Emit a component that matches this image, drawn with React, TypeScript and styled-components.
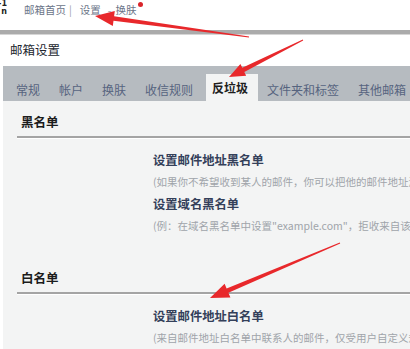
import React from "react";
import styled, { createGlobalStyle } from "styled-components";

const Global = createGlobalStyle`
  html, body { margin: 0; padding: 0; background: #fff; }
  body { font-family: "Noto Sans CJK SC", "Microsoft YaHei", sans-serif; overflow: hidden; }
  #root { width: 410px; height: 349px; position: relative; overflow: hidden; }
`;

const Page = styled.div`
  width: 410px;
  height: 349px;
  display: flex;
  flex-direction: column;
  background: #fff;
`;

const TopBar = styled.div`
  height: 31px;
  display: flex;
  align-items: flex-start;
  font-size: 10.5px;
  line-height: 19px;
  color: #6b7588;
`;

const Logo = styled.div`
  width: 7px;
  height: 16px;
  overflow: hidden;
  display: flex;
  flex-direction: column;
  align-items: flex-end;
  font-family: "DejaVu Sans", sans-serif;
  font-weight: bold;
  color: #222;
  font-size: 8px;
  line-height: 8px;
  white-space: nowrap;
`;

const Nav = styled.nav`
  display: flex;
  align-items: flex-start;
  margin-left: 17px;
`;

const NavLink = styled.span<{ $gap?: number }>`
  margin-right: ${(p) => p.$gap ?? 0}px;
  position: relative;
`;

const Sep = styled.span<{ $gap: number }>`
  color: #9aa0a8;
  margin-right: ${(p) => p.$gap}px;
`;

const Dot = styled.span`
  position: absolute;
  right: -6px;
  top: 2px;
  width: 5px;
  height: 5px;
  border-radius: 50%;
  background: #d9252b;
`;

const Band = styled.div`
  height: 4px;
  background: #ababab;
  border-bottom: 1px solid #d6d6d6;
`;

const Panel = styled.div`
  margin-left: 3px;
  flex: 1;
  display: flex;
  flex-direction: column;
`;

const PageTitle = styled.div`
  height: 31px;
  line-height: 30px;
  padding-left: 7px;
  font-size: 12.5px;
  color: #22262e;
`;

const TabBar = styled.div`
  height: 35px;
  background: #b6bbc0;
  display: flex;
  align-items: flex-end;
  padding-left: 7px;
  gap: 3px;
  white-space: nowrap;
`;

const Tab = styled.div<{ $active?: boolean }>`
  height: 27px;
  padding: 0 10px 0 6px;
  font-size: 12px;
  line-height: ${(p) => (p.$active ? "27px" : "31px")};
  color: ${(p) => (p.$active ? "#1e1e1e" : "#56647f")};
  font-weight: ${(p) => (p.$active ? "bold" : "normal")};
  background: ${(p) => (p.$active ? "#f3f4f4" : "transparent")};
`;

const Content = styled.div`
  flex: 1;
  background: #f3f4f4;
  display: flex;
  flex-direction: column;
`;

const SectionTitle = styled.div<{ $top: number }>`
  margin-top: ${(p) => p.$top}px;
  padding-left: 18px;
  line-height: 20px;
  font-size: 12.5px;
  font-weight: bold;
  color: #1c1c1c;
`;

const Divider = styled.div`
  margin: 4px 0 10px 14px;
  height: 2px;
  background: #a4a4a4;
  border-bottom: 1px solid #fff;
`;

const Items = styled.div`
  padding-left: 150px;
  white-space: nowrap;
`;

const ItemTitle = styled.div`
  font-size: 12.3px;
  line-height: 22px;
  font-weight: bold;
  color: #34405a;
`;

const ItemDesc = styled.div`
  font-size: 10.5px;
  line-height: 22px;
  color: #a0a4aa;
`;

const Overlay = styled.svg`
  position: absolute;
  left: 0;
  top: 0;
  pointer-events: none;
`;

type Pt = [number, number];

function arrowPath(tail: Pt, tip: Pt, tailW: number, shaftW: number, headW: number, headL: number) {
  const dx = tip[0] - tail[0];
  const dy = tip[1] - tail[1];
  const len = Math.hypot(dx, dy);
  const ux = dx / len;
  const uy = dy / len;
  const nx = -uy;
  const ny = ux;
  const base: Pt = [tip[0] - ux * headL, tip[1] - uy * headL];
  const p = (pt: Pt, w: number, s: number): string =>
    `${(pt[0] + nx * w * s).toFixed(1)},${(pt[1] + ny * w * s).toFixed(1)}`;
  const pts = [
    p(tail, tailW / 2, 1),
    p(base, shaftW / 2, 1),
    p(base, headW / 2, 1),
    `${tip[0]},${tip[1]}`,
    p(base, headW / 2, -1),
    p(base, shaftW / 2, -1),
    p(tail, tailW / 2, -1),
  ];
  return `M${pts.join(" L")} Z`;
}

const arrows = [
  { tail: [249, 37] as Pt, tip: [95, 16] as Pt, headW: 15, headL: 19 },
  { tail: [303, 40] as Pt, tip: [229, 77] as Pt, headW: 13, headL: 16 },
  { tail: [340, 243] as Pt, tip: [210, 298] as Pt, headW: 15, headL: 19 },
];

const tabs = ["常规", "帐户", "换肤", "收信规则", "反垃圾", "文件夹和标签", "其他邮箱"];

export default function App() {
  return (
    <>
      <Global />
      <Page>
        <TopBar>
          <Logo>
            <span>-1</span>
            <span>n</span>
          </Logo>
          <Nav>
            <NavLink $gap={3}>邮箱首页</NavLink>
            <Sep $gap={8}>|</Sep>
            <NavLink $gap={7}>设置</NavLink>
            <Sep $gap={4}>-</Sep>
            <NavLink>
              换肤
              <Dot />
            </NavLink>
          </Nav>
        </TopBar>
        <Band />
        <Panel>
          <PageTitle>邮箱设置</PageTitle>
          <TabBar>
            {tabs.map((t) => (
              <Tab key={t} $active={t === "反垃圾"}>
                {t}
              </Tab>
            ))}
          </TabBar>
          <Content>
            <SectionTitle $top={11}>黑名单</SectionTitle>
            <Divider />
            <Items>
              <ItemTitle>设置邮件地址黑名单</ItemTitle>
              <ItemDesc>(如果你不希望收到某人的邮件，你可以把他的邮件地址添加到黑名单中)</ItemDesc>
              <ItemTitle>设置域名黑名单</ItemTitle>
              <ItemDesc>(例：在域名黑名单中设置"example.com"，拒收来自该域名的邮件)</ItemDesc>
            </Items>
            <SectionTitle $top={31}>白名单</SectionTitle>
            <Divider />
            <Items>
              <ItemTitle>设置邮件地址白名单</ItemTitle>
              <ItemDesc>(来自邮件地址白名单中联系人的邮件，仅受用户自定义规则限制)</ItemDesc>
            </Items>
          </Content>
        </Panel>
      </Page>
      <Overlay width={410} height={349} viewBox="0 0 410 349">
        {arrows.map((a, i) => (
          <path key={i} d={arrowPath(a.tail, a.tip, 1, 4.5, a.headW, a.headL)} fill="#e8282b" />
        ))}
      </Overlay>
    </>
  );
}
